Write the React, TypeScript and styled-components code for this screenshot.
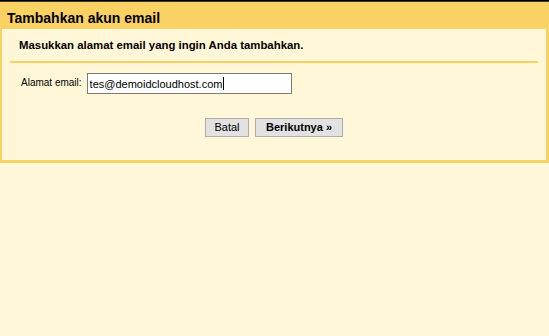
import styled, { createGlobalStyle } from "styled-components";

const Colors = {
  yellow: "#fad163",
  cream: "#fff7d7",
  text: "#000000",
  inputBorder: "#7b7b7b",
  buttonBg: "#e2e2e2",
  buttonBorder: "#adadad",
};

const GlobalStyle = createGlobalStyle`
  html, body {
    margin: 0;
    padding: 0;
    background-color: ${Colors.cream};
    font-family: "Liberation Sans", Arial, sans-serif;
  }
`;

const Page = styled.div`
  min-height: 100vh;
  background-color: ${Colors.cream};
`;

const Dialog = styled.div`
  background-color: ${Colors.yellow};
  border-top: 1px solid #000;
  box-shadow: inset 0 1px 0 #3a3a3a;
  padding: 1px 3px 3px 2px;
`;

const Title = styled.div`
  font-size: 14px;
  font-weight: bold;
  color: ${Colors.text};
  padding: 5px 0 0 5px;
  line-height: 22px;
  height: 22px;
`;

const Content = styled.div`
  background-color: ${Colors.cream};
  padding: 10px 8px 23px 8px;
`;

const Intro = styled.div`
  font-size: 11.4px;
  font-weight: bold;
  line-height: 13px;
  padding-left: 9px;
`;

const Divider = styled.div`
  height: 2px;
  background-color: ${Colors.yellow};
  margin-top: 9px;
`;

const FormRow = styled.div`
  display: flex;
  align-items: flex-start;
  gap: 5px;
  margin-top: 10px;
  padding-left: 11px;
`;

const Label = styled.label`
  font-size: 10px;
  line-height: 12px;
  padding-top: 4px;
  color: ${Colors.text};
`;

const Field = styled.div`
  position: relative;
`;

const EmailInput = styled.input`
  box-sizing: border-box;
  display: block;
  width: 205px;
  height: 21px;
  margin: 0;
  border: 1px solid ${Colors.inputBorder};
  padding: 1px 2px 0 2px;
  font-family: "Liberation Sans", Arial, sans-serif;
  font-size: 11px;
  color: ${Colors.text};
  background: #fff;
  outline: none;
  border-radius: 0;
  caret-color: transparent;
`;

// text cursor drawn over the end of the typed address
const Caret = styled.span`
  position: absolute;
  left: 136px;
  top: 4px;
  width: 1px;
  height: 13px;
  background-color: #000;
  pointer-events: none;
`;

const ButtonRow = styled.div`
  display: flex;
  justify-content: center;
  gap: 6px;
  margin-top: 24px;
`;

const Button = styled.button<{ $width: number; $primary?: boolean }>`
  box-sizing: border-box;
  width: ${(props) => props.$width}px;
  height: 19px;
  margin: 0;
  padding: 0;
  border: 1px solid ${Colors.buttonBorder};
  border-radius: 0;
  background-color: ${Colors.buttonBg};
  font-family: "Liberation Sans", Arial, sans-serif;
  font-size: 11px;
  font-weight: ${(props) => (props.$primary ? "bold" : "normal")};
  color: ${Colors.text};
  line-height: 17px;
  cursor: pointer;
`;

const App = () => {
  return (
    <Page>
      <GlobalStyle />
      <Dialog>
        <Title>Tambahkan akun email</Title>
        <Content>
          <Intro>Masukkan alamat email yang ingin Anda tambahkan.</Intro>
          <Divider />
          <FormRow>
            <Label htmlFor="email">Alamat email:</Label>
            <Field>
              <EmailInput
                id="email"
                type="text"
                defaultValue="tes@demoidcloudhost.com"
              />
              <Caret />
            </Field>
          </FormRow>
          <ButtonRow>
            <Button $width={44}>Batal</Button>
            <Button $width={88} $primary>
              Berikutnya »
            </Button>
          </ButtonRow>
        </Content>
      </Dialog>
    </Page>
  );
};

export default App;
